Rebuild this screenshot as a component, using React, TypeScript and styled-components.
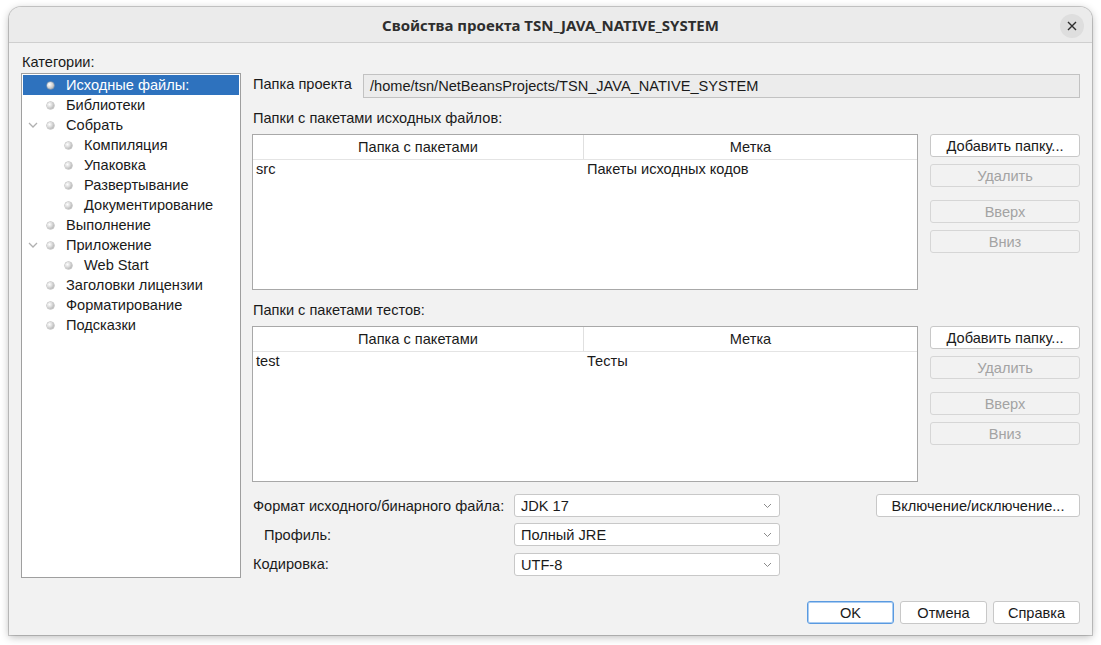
import React from "react";
import styled, { createGlobalStyle } from "styled-components";

const Global = createGlobalStyle`
  html, body { margin: 0; padding: 0; background: #ffffff; }
  body { font-family: "Liberation Sans", Arial, sans-serif; }
  #root { width: 1101px; height: 645px; }
`;

const Desktop = styled.div`
  width: 1101px;
  height: 645px;
  box-sizing: border-box;
  padding: 7px 9px 10px 9px;
  background: #ffffff;
`;

const Window = styled.div`
  width: 1083px;
  height: 628px;
  display: flex;
  flex-direction: column;
  background: #f2f2f2;
  border-radius: 12px 12px 0 0;
  box-shadow: 0 0 0 1px rgba(0,0,0,0.18), 0 2px 8px rgba(0,0,0,0.28);
  overflow: hidden;
`;

const TitleBar = styled.div`
  height: 35px;
  flex: none;
  position: relative;
  display: flex;
  align-items: center;
  justify-content: center;
  background: #ebebeb;
  border-bottom: 1px solid #cfcfcf;
`;

const Title = styled.div`
  font-family: "Noto Sans", sans-serif;
  font-weight: 700;
  font-size: 15px;
  color: #2e2e2e;
`;

const CloseButton = styled.div`
  position: absolute;
  right: 8px;
  top: 7px;
  width: 24px;
  height: 24px;
  border-radius: 50%;
  background: #dedede;
  display: flex;
  align-items: center;
  justify-content: center;
`;

const Body = styled.div`
  flex: 1;
  display: flex;
  flex-direction: column;
  padding: 9px 12px 11px 12px;
  font-size: 14.6px;
  color: #1a1a1a;
`;

const Main = styled.div`
  display: grid;
  grid-template-columns: 220px 1fr;
  column-gap: 11px;
`;

const LeftCol = styled.div`
  display: flex;
  flex-direction: column;
`;

const CategoryLabel = styled.div`
  height: 18px;
  line-height: 18px;
  margin-left: 1px;
  margin-top: 1px;
  margin-bottom: 2px;
`;

const TreeBox = styled.div`
  height: 501px;
  border: 1px solid #9f9f9f;
  background: #ffffff;
  padding: 1px;
`;

const TreeRow = styled.div<{ $level: number; $selected?: boolean }>`
  height: 20px;
  display: flex;
  align-items: center;
  position: relative;
  padding-left: ${(p) => (p.$level === 1 ? 24 : 42)}px;
  background: ${(p) => (p.$selected ? "#2e72be" : "transparent")};
  color: ${(p) => (p.$selected ? "#ffffff" : "#1a1a1a")};
`;

const Bullet = styled.span`
  width: 7px;
  height: 7px;
  border-radius: 50%;
  background: radial-gradient(circle at 35% 35%, #ffffff 0%, #d8d8d8 45%, #9a9a9a 100%);
  box-shadow: 0 0 0 0.5px #a8a8a8;
  margin-right: 12px;
  flex: none;
`;

const Chevron = styled.svg`
  position: absolute;
  left: 5px;
  top: 7px;
`;

const RightCol = styled.div`
  display: flex;
  flex-direction: column;
  padding-top: 22px;
`;

const ProjectRow = styled.div`
  display: flex;
  align-items: center;
  height: 24px;
`;

const ProjectLabel = styled.div`
  width: 110px;
  padding-left: 1px;
  margin-top: -5px;
`;

const ReadField = styled.div`
  flex: 1;
  height: 22px;
  border: 1px solid #c2c2c2;
  background: #ececec;
  display: flex;
  align-items: center;
  padding-left: 6px;
`;

const SectionLabel = styled.div<{ $top: number }>`
  margin-top: ${(p) => p.$top}px;
  height: 18px;
  line-height: 18px;
  padding-left: 1px;
`;

const TableRow = styled.div`
  display: flex;
  gap: 12px;
  margin-top: 7px;
`;

const Table = styled.div`
  width: 664px;
  height: 154px;
  border: 1px solid #a8a8a8;
  background: #ffffff;
  display: flex;
  flex-direction: column;
`;

const THead = styled.div`
  display: grid;
  grid-template-columns: 331px 1fr;
  height: 24px;
  border-bottom: 1px solid #e4e4e4;
`;

const TH = styled.div<{ $last?: boolean }>`
  display: flex;
  align-items: center;
  justify-content: center;
  border-right: ${(p) => (p.$last ? "none" : "1px solid #e0e0e0")};
`;

const TRow = styled.div`
  display: grid;
  grid-template-columns: 331px 1fr;
  height: 18px;
  align-items: center;
`;

const TD = styled.div`
  padding-left: 3px;
`;

const ButtonCol = styled.div`
  display: flex;
  flex-direction: column;
  width: 150px;
`;

const Btn = styled.div<{ $disabled?: boolean; $top?: number; $w?: number; $focused?: boolean }>`
  height: 21px;
  width: ${(p) => (p.$w ? `${p.$w - 2}px` : "auto")};
  margin-top: ${(p) => p.$top ?? 0}px;
  border: 1px solid ${(p) => (p.$focused ? "#5a9ae0" : p.$disabled ? "#d6d6d6" : "#c8c8c8")};
  border-radius: 3px;
  background: ${(p) => (p.$disabled ? "#f2f2f2" : "#ffffff")};
  color: ${(p) => (p.$disabled ? "#a3a3a3" : "#1a1a1a")};
  display: flex;
  align-items: center;
  justify-content: center;
  box-shadow: ${(p) => (p.$focused ? "inset 0 0 0 1px #a9ccf2" : "none")};
`;

const FormGrid = styled.div`
  margin-top: 12px;
  display: grid;
  grid-template-columns: 262px 266px 1fr;
  grid-template-rows: 23px 23px 23px;
  row-gap: 6px;
  align-items: center;
`;

const FormLabel = styled.div<{ $indent?: number }>`
  padding-left: ${(p) => 1 + (p.$indent ?? 0)}px;
`;

const Combo = styled.div<{ $shift?: number }>`
  height: 21px;
  margin-top: ${(p) => p.$shift ?? 0}px;
  border: 1px solid #c8c8c8;
  border-radius: 3px;
  background: #ffffff;
  display: flex;
  align-items: center;
  justify-content: space-between;
  padding: 0 7px 0 6px;
`;

const ComboSide = styled.div`
  display: flex;
  justify-content: flex-end;
`;

const Footer = styled.div`
  margin-top: auto;
  display: flex;
  justify-content: flex-end;
  gap: 6px;
`;

const Down = () => (
  <svg width="9" height="6" viewBox="0 0 9 6">
    <path d="M1 1 L4.5 4.5 L8 1" fill="none" stroke="#8a8a8a" strokeWidth="1" />
  </svg>
);

const tree: { label: string; level: number; expanded?: boolean; selected?: boolean }[] = [
  { label: "Исходные файлы:", level: 1, selected: true },
  { label: "Библиотеки", level: 1 },
  { label: "Собрать", level: 1, expanded: true },
  { label: "Компиляция", level: 2 },
  { label: "Упаковка", level: 2 },
  { label: "Развертывание", level: 2 },
  { label: "Документирование", level: 2 },
  { label: "Выполнение", level: 1 },
  { label: "Приложение", level: 1, expanded: true },
  { label: "Web Start", level: 2 },
  { label: "Заголовки лицензии", level: 1 },
  { label: "Форматирование", level: 1 },
  { label: "Подсказки", level: 1 },
];

const PackageTable = ({ row }: { row: [string, string] }) => (
  <Table>
    <THead>
      <TH>Папка с пакетами</TH>
      <TH $last>Метка</TH>
    </THead>
    <TRow>
      <TD>{row[0]}</TD>
      <TD>{row[1]}</TD>
    </TRow>
  </Table>
);

const Buttons = () => (
  <ButtonCol>
    <Btn>Добавить папку...</Btn>
    <Btn $disabled $top={7}>Удалить</Btn>
    <Btn $disabled $top={13}>Вверх</Btn>
    <Btn $disabled $top={7}>Вниз</Btn>
  </ButtonCol>
);

export default function App() {
  return (
    <Desktop>
      <Global />
      <Window>
        <TitleBar>
          <Title>Свойства проекта TSN_JAVA_NATIVE_SYSTEM</Title>
          <CloseButton>
            <svg width="10" height="10" viewBox="0 0 10 10">
              <path d="M1 1 L9 9 M9 1 L1 9" stroke="#2e2e2e" strokeWidth="1.4" />
            </svg>
          </CloseButton>
        </TitleBar>
        <Body>
          <Main>
            <LeftCol>
              <CategoryLabel>Категории:</CategoryLabel>
              <TreeBox>
                {tree.map((t) => (
                  <TreeRow key={t.label} $level={t.level} $selected={t.selected}>
                    {t.expanded && (
                      <Chevron width="10" height="6" viewBox="0 0 10 6">
                        <path d="M1 1 L5 5 L9 1" fill="none" stroke="#b0b0b0" strokeWidth="1.3" />
                      </Chevron>
                    )}
                    <Bullet />
                    {t.label}
                  </TreeRow>
                ))}
              </TreeBox>
            </LeftCol>
            <RightCol>
              <ProjectRow>
                <ProjectLabel>Папка проекта</ProjectLabel>
                <ReadField>/home/tsn/NetBeansProjects/TSN_JAVA_NATIVE_SYSTEM</ReadField>
              </ProjectRow>
              <SectionLabel $top={11}>Папки с пакетами исходных файлов:</SectionLabel>
              <TableRow>
                <PackageTable row={["src", "Пакеты исходных кодов"]} />
                <Buttons />
              </TableRow>
              <SectionLabel $top={11}>Папки с пакетами тестов:</SectionLabel>
              <TableRow>
                <PackageTable row={["test", "Тесты"]} />
                <Buttons />
              </TableRow>
              <FormGrid>
                <FormLabel>Формат исходного/бинарного файла:</FormLabel>
                <Combo>JDK 17<Down /></Combo>
                <ComboSide>
                  <Btn $w={204}>Включение/исключение...</Btn>
                </ComboSide>
                <FormLabel $indent={11}>Профиль:</FormLabel>
                <Combo>Полный JRE<Down /></Combo>
                <div />
                <FormLabel>Кодировка:</FormLabel>
                <Combo $shift={2}>UTF-8<Down /></Combo>
                <div />
              </FormGrid>
            </RightCol>
          </Main>
          <Footer>
            <Btn $w={87} $focused>OK</Btn>
            <Btn $w={87}>Отмена</Btn>
            <Btn $w={87}>Справка</Btn>
          </Footer>
        </Body>
      </Window>
    </Desktop>
  );
}
